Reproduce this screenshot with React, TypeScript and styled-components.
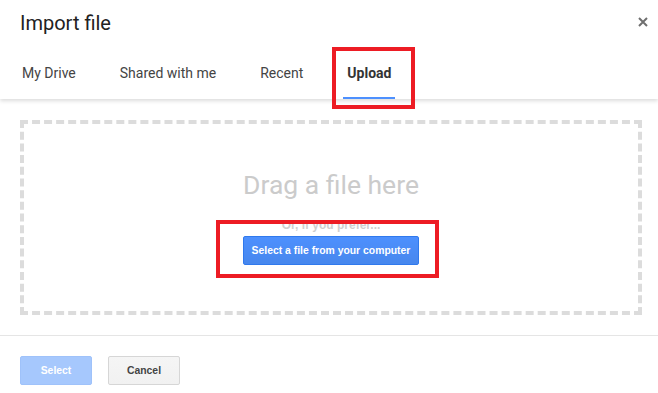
import React from 'react';
import styled, { createGlobalStyle } from 'styled-components';

const GlobalStyle = createGlobalStyle`
  html, body {
    margin: 0;
    padding: 0;
    background: #fff;
  }
  body {
    font-family: Roboto, "Liberation Sans", Arial, sans-serif;
  }
`;

const Dialog = styled.div`
  width: 658px;
  height: 393px;
  display: flex;
  flex-direction: column;
  background: #fff;
  overflow: hidden;
`;

const Header = styled.div`
  position: relative;
  z-index: 2;
  background: #fff;
  box-shadow: 0 2px 4px rgba(0, 0, 0, 0.14);
`;

const TitleRow = styled.div`
  height: 46px;
  display: flex;
  align-items: center;
  justify-content: space-between;
  padding: 0 10px 0 20px;
`;

const Title = styled.h1`
  margin: 0;
  font-size: 20px;
  line-height: 24px;
  font-weight: 400;
  color: #222;
`;

const CloseButton = styled.button`
  border: 0;
  background: none;
  padding: 0;
  width: 10px;
  height: 10px;
  margin-top: -2px;
  display: flex;
  cursor: pointer;
`;

const TabBar = styled.div`
  height: 53px;
  display: flex;
  align-items: stretch;
  gap: 36px;
  padding-left: 18px;
`;

const Tab = styled.div<{ $active?: boolean }>`
  position: relative;
  display: flex;
  align-items: center;
  padding: 2px 4px 0;
  font-size: 14px;
  font-weight: ${p => (p.$active ? 700 : 400)};
  color: ${p => (p.$active ? '#333' : '#444')};
  border-bottom: 2px solid ${p => (p.$active ? '#4d90fe' : 'transparent')};
`;

const Highlight = styled.span<{ $top: number; $right: number; $bottom: number; $left: number }>`
  position: absolute;
  top: ${p => p.$top}px;
  right: ${p => p.$right}px;
  bottom: ${p => p.$bottom}px;
  left: ${p => p.$left}px;
  border: 4px solid #ed1c24;
  pointer-events: none;
  z-index: 5;
`;

const Body = styled.div`
  flex: 1;
  padding: 21px 16px 20px 20px;
  display: flex;
  border-bottom: 1px solid #e5e5e5;
`;

const DropZone = styled.div`
  flex: 1;
  border: 4px dashed #dcdcdc;
  display: flex;
  flex-direction: column;
  align-items: center;
  justify-content: center;
`;

const DragText = styled.div`
  font-size: 26.5px;
  line-height: 30px;
  color: #cbcbcb;
  margin-bottom: 19px;
`;

const OrText = styled.div`
  font-family: "Liberation Sans", Arial, sans-serif;
  font-size: 12px;
  line-height: 13px;
  font-weight: 700;
  color: #cfcfcf;
  margin-bottom: 4px;
`;

const ButtonWrap = styled.div`
  position: relative;
  display: flex;
`;

const Button = styled.button<{ $variant: 'primary' | 'disabled' | 'plain'; $width?: number }>`
  height: 29px;
  ${p => (p.$width ? `width: ${p.$width}px;` : 'padding: 0 8px;')}
  box-sizing: border-box;
  border-radius: 2px;
  font-family: "Liberation Sans", Arial, sans-serif;
  font-size: 10.4px;
  font-weight: 700;
  cursor: pointer;
  ${p =>
    p.$variant === 'primary'
      ? `
    background: linear-gradient(#4d90fe, #4787ed);
    border: 1px solid #3079ed;
    color: #fff;
  `
      : p.$variant === 'disabled'
      ? `
    background: #a6c8fd;
    border: 1px solid #9fc2fa;
    color: #fff;
  `
      : `
    background: linear-gradient(#f5f5f5, #f1f1f1);
    border: 1px solid #d6d6d6;
    color: #444;
  `}
`;

const Footer = styled.div`
  height: 57px;
  display: flex;
  align-items: flex-start;
  gap: 16px;
  padding: 20px 20px 0;
  box-sizing: border-box;
`;

const tabs = ['My Drive', 'Shared with me', 'Recent', 'Upload'];

const App = () => {
  return (
    <>
      <GlobalStyle />
      <Dialog>
        <Header>
          <TitleRow>
            <Title>Import file</Title>
            <CloseButton aria-label="Close">
              <svg width="10" height="10" viewBox="0 0 10 10">
                <path d="M1 1L9 9M9 1L1 9" stroke="#6f6f6f" strokeWidth="2" />
              </svg>
            </CloseButton>
          </TitleRow>
          <TabBar>
            {tabs.map(tab => (
              <Tab key={tab} $active={tab === 'Upload'}>
                {tab}
                {tab === 'Upload' && <Highlight $top={1} $right={-20} $bottom={-12} $left={-11} />}
              </Tab>
            ))}
          </TabBar>
        </Header>
        <Body>
          <DropZone>
            <DragText>Drag a file here</DragText>
            <OrText>Or, if you prefer...</OrText>
            <ButtonWrap>
              <Button $variant="primary">Select a file from your computer</Button>
              <Highlight $top={-16} $right={-20} $bottom={-13} $left={-27} />
            </ButtonWrap>
          </DropZone>
        </Body>
        <Footer>
          <Button $variant="disabled" $width={72}>Select</Button>
          <Button $variant="plain" $width={72}>Cancel</Button>
        </Footer>
      </Dialog>
    </>
  );
};

export default App;
